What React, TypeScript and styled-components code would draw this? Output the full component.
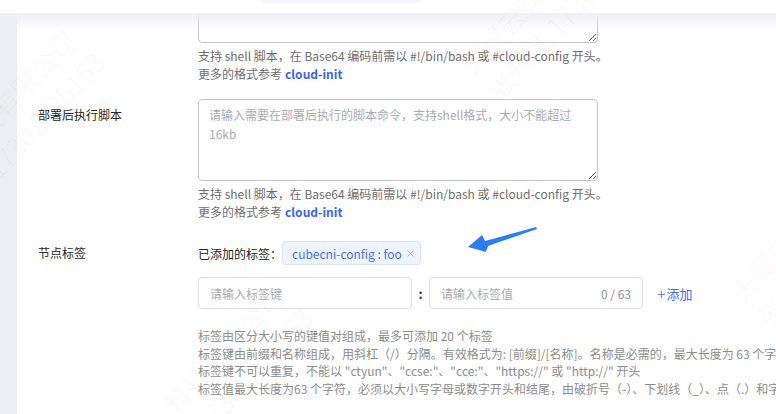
import React from 'react';
import styled, { createGlobalStyle } from 'styled-components';
import { X } from 'lucide-react';

const GlobalStyle = createGlobalStyle`
  html, body {
    margin: 0;
    padding: 0;
    background: #ffffff;
  }
  body {
    font-family: "Noto Sans CJK SC", "Noto Sans", sans-serif;
    font-size: 12px;
    color: #262626;
  }
  * { box-sizing: border-box; }
`;

const Page = styled.div`
  width: 776px;
  height: 414px;
  overflow: hidden;
  position: relative;
  background: #ffffff;
  display: flex;
  flex-direction: column;
`;

const TopBar = styled.div`
  height: 13px;
  flex: none;
  background: #ffffff;
  padding-left: 261px;
  position: relative;
  z-index: 3;
`;

const SearchStub = styled.div`
  width: 159px;
  height: 3px;
  background: #f4f5f8;
  border-radius: 0 0 4px 4px;
`;

const Body = styled.div`
  flex: 1;
  display: flex;
  min-height: 0;
`;

const SideStrip = styled.div`
  width: 17px;
  flex: none;
  background: #eceef3;
`;

const Main = styled.div`
  flex: 1;
  position: relative;
  overflow: hidden;
  padding-left: 21px;
  background: #ffffff;
`;

const TopShadow = styled.div`
  position: absolute;
  left: -17px;
  right: 0;
  top: 0;
  height: 18px;
  background: linear-gradient(180deg, #efeff4 0%, rgba(255, 255, 255, 0) 100%);
  pointer-events: none;
  z-index: 2;
`;

const Form = styled.div`
  margin-top: -52px;
  display: flex;
  flex-direction: column;
  gap: 16px;
`;

const Row = styled.div`
  display: grid;
  grid-template-columns: 160px 1fr;
`;

const Label = styled.div`
  font-size: 12px;
  line-height: 32px;
  color: #262626;
  white-space: nowrap;
`;

const Control = styled.div`
  display: flex;
  flex-direction: column;
  min-width: 0;
`;

const ScriptArea = styled.textarea`
  width: 400px;
  height: 82px;
  border: 1px solid #c3c4cc;
  border-radius: 4px;
  padding: 5px 10px;
  font-family: inherit;
  font-size: 12px;
  line-height: 19px;
  color: #262626;
  resize: vertical;
  outline: none;
  display: block;

  &::placeholder {
    color: #a9abb2;
  }
`;

const Help = styled.div<{ $tone?: 'dark' | 'light'; $gap?: number }>`
  margin-top: ${({ $gap }) => $gap ?? 4}px;
  font-size: 12px;
  line-height: ${({ $tone }) => ($tone === 'light' ? '17.7px' : '18px')};
  color: ${({ $tone }) => ($tone === 'light' ? '#8c8c8c' : '#6e6e6e')};
  white-space: nowrap;
`;

const HelpLink = styled.a`
  color: #3c63f2;
  font-weight: 700;
  text-decoration: none;
  margin-left: 3px;
`;

const TagLine = styled.div`
  height: 32px;
  display: flex;
  align-items: center;
`;

const TagCaption = styled.span`
  font-size: 12px;
  color: #262626;
`;

const Tag = styled.span`
  height: 24px;
  display: inline-flex;
  align-items: center;
  gap: 3px;
  padding: 0 4px 0 9px;
  background: #eef4ff;
  border: 1px solid #d7e4fd;
  border-radius: 4px;
  color: #4f6ff2;
  font-size: 12px;
`;

const TagClose = styled.span`
  display: inline-flex;
  color: #6f89f0;
`;

const InputLine = styled.div`
  margin-top: 8px;
  display: flex;
  align-items: center;
`;

const InputBox = styled.div`
  width: 214px;
  height: 32px;
  border: 1px solid #dcdee3;
  border-radius: 4px;
  display: flex;
  align-items: center;
  padding: 0 11px;
  background: #ffffff;
`;

const TextInput = styled.input`
  flex: 1;
  min-width: 0;
  border: none;
  outline: none;
  font-family: inherit;
  font-size: 12px;
  color: #262626;
  padding: 0;
  background: transparent;

  &::placeholder {
    color: #a9abb2;
  }
`;

const Counter = styled.span`
  font-size: 12px;
  color: #8f9299;
  white-space: nowrap;
`;

const Colon = styled.span`
  width: 17px;
  text-align: center;
  font-size: 13px;
  font-weight: 700;
  color: #3a3a3a;
`;

const AddButton = styled.button`
  margin-left: 14px;
  border: none;
  background: none;
  padding: 0;
  font-family: inherit;
  font-size: 13px;
  color: #4a6cf5;
  cursor: pointer;
  display: inline-flex;
  align-items: center;
  gap: 1px;
`;

const PlusMark = styled.span`
  font-size: 16px;
  font-weight: 300;
  line-height: 1;
`;

const ArrowMark = styled.svg`
  position: absolute;
  left: 443px;
  top: 208px;
  pointer-events: none;
  z-index: 4;
`;

const WatermarkLayer = styled.div`
  position: absolute;
  inset: 0;
  pointer-events: none;
  z-index: 5;
`;

const Watermark = styled.div<{ $x: number; $y: number }>`
  position: absolute;
  left: ${({ $x }) => $x}px;
  top: ${({ $y }) => $y}px;
  transform-origin: 0 0;
  transform: rotate(-47deg);
  font-size: 27px;
  line-height: 36px;
  color: rgba(0, 0, 0, 0.04);
  white-space: nowrap;
  font-family: "Noto Sans CJK SC", sans-serif;
  font-weight: 300;
`;

const marks = [
  { x: -108, y: 200 },
  { x: 452, y: 58 },
  { x: 100, y: 456 },
  { x: 722, y: 286 },
];

const App: React.FC = () => {
  return (
    <>
      <GlobalStyle />
      <Page>
        <TopBar>
          <SearchStub />
        </TopBar>
        <Body>
          <SideStrip />
          <Main>
            <TopShadow />
            <Form>
              <Row>
                <Label>部署前执行脚本</Label>
                <Control>
                  <ScriptArea placeholder="" />
                  <Help>支持 shell 脚本，在 Base64 编码前需以 #!/bin/bash 或 #cloud-config 开头。</Help>
                  <Help $gap={0}>
                    更多的格式参考<HelpLink>cloud-init</HelpLink>
                  </Help>
                </Control>
              </Row>

              <Row>
                <Label>部署后执行脚本</Label>
                <Control>
                  <ScriptArea placeholder="请输入需要在部署后执行的脚本命令，支持shell格式，大小不能超过16kb" />
                  <Help>支持 shell 脚本，在 Base64 编码前需以 #!/bin/bash 或 #cloud-config 开头。</Help>
                  <Help $gap={0}>
                    更多的格式参考<HelpLink>cloud-init</HelpLink>
                  </Help>
                </Control>
              </Row>

              <Row>
                <Label>节点标签</Label>
                <Control>
                  <TagLine>
                    <TagCaption>已添加的标签：</TagCaption>
                    <Tag>
                      cubecni-config : foo
                      <TagClose>
                        <X size={11} strokeWidth={1.4} />
                      </TagClose>
                    </Tag>
                  </TagLine>
                  <InputLine>
                    <InputBox>
                      <TextInput placeholder="请输入标签键" />
                    </InputBox>
                    <Colon>:</Colon>
                    <InputBox>
                      <TextInput placeholder="请输入标签值" />
                      <Counter>0 / 63</Counter>
                    </InputBox>
                    <AddButton>
                      <PlusMark>+</PlusMark>添加
                    </AddButton>
                  </InputLine>
                  <Help $tone="light" $gap={18}>
                    <div>标签由区分大小写的键值对组成，最多可添加 20 个标签</div>
                    <div>标签键由前缀和名称组成，用斜杠（/）分隔。有效格式为: [前缀]/[名称]。名称是必需的，最大长度为 63 个字符。</div>
                    <div>标签键不可以重复，不能以 "ctyun"、"ccse:"、"cce:"、"https://" 或 "http://" 开头</div>
                    <div>标签值最大长度为63 个字符，必须以大小写字母或数字开头和结尾，由破折号（-）、下划线（_）、点（.）和字母数字组成</div>
                  </Help>
                </Control>
              </Row>
            </Form>
          </Main>
        </Body>

        {/* annotation arrow drawn over the screenshot */}
        <ArrowMark width="100" height="50" viewBox="0 0 100 50">
          <path d="M25 39 L39 27 L42 33 L93 19 L94 21 L45 38 L43 44 Z" fill="#2b7ef1" />
        </ArrowMark>

        <WatermarkLayer>
          {marks.map((m, i) => (
            <Watermark key={i} $x={m.x} $y={m.y}>
              <div>天翼云科技有限公司</div>
              <div>张长胜 17302025153</div>
            </Watermark>
          ))}
        </WatermarkLayer>
      </Page>
    </>
  );
};

export default App;
